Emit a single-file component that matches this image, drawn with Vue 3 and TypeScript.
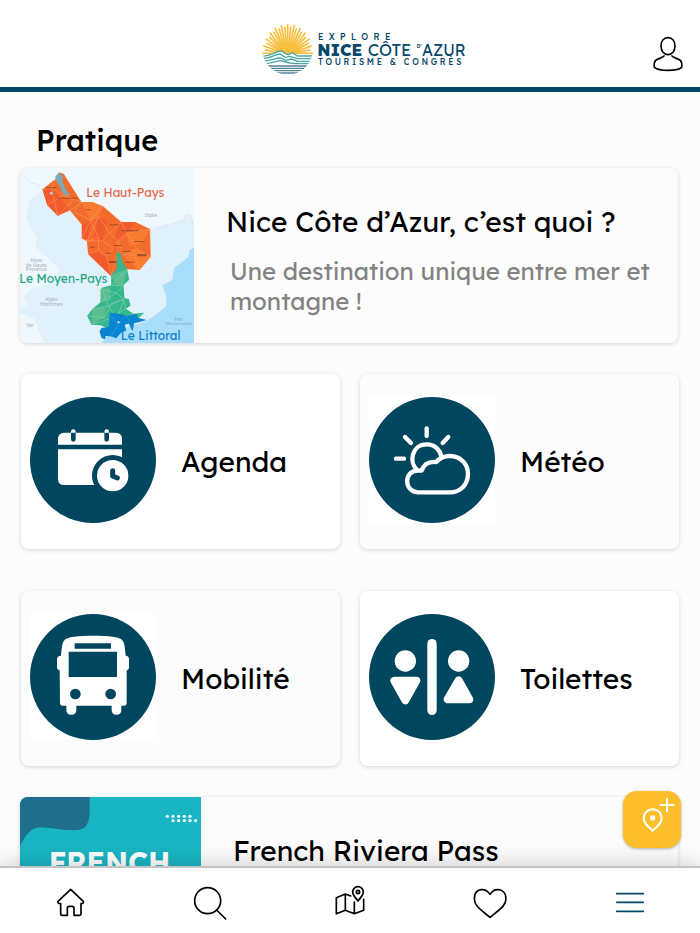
<script setup lang="ts">
interface Tile {
  id: 'agenda' | 'meteo' | 'mobilite' | 'toilettes'
  label: string
  box: string
  white: boolean
}

const tiles: Tile[] = [
  { id: 'agenda', label: 'Agenda', box: '45 80 378 378', white: true },
  { id: 'meteo', label: 'Météo', box: '42 80 378 378', white: false },
  { id: 'mobilite', label: 'Mobilité', box: '45 86 378 378', white: false },
  { id: 'toilettes', label: 'Toilettes', box: '42 86 378 378', white: true },
]

// Sun rays fan out over the upper half of the logo disc.
const rays = Array.from({ length: 25 }, (_, i) => {
  const angle = (Math.PI * i) / 24
  const outer = i % 2 === 0 ? 76 : 69
  return {
    x1: 113 - Math.cos(angle) * 24,
    y1: 130 - Math.sin(angle) * 20,
    x2: 113 - Math.cos(angle) * outer,
    y2: 130 - Math.sin(angle) * (outer + 12),
  }
})

const passDots = [
  [472, 95], [489, 95], [506, 95], [523, 95], [540, 95],
  [489, 108], [506, 108], [523, 108], [540, 108], [557, 108],
]
</script>

<template>
  <div class="app">
    <header class="topbar">
      <a class="logo" href="#" aria-label="Explore Nice Côte d'Azur">
        <svg class="logo-art" viewBox="30 0 630 225" aria-hidden="true">
          <clipPath id="disc"><circle cx="113" cy="118" r="76" /></clipPath>
          <g stroke="#f8be3c" stroke-width="5">
            <line v-for="(r, i) in rays" :key="i" :x1="r.x1" :y1="r.y1" :x2="r.x2" :y2="r.y2" />
          </g>
          <path d="M77 132a36 34 0 0 1 72 0z" fill="#f8be3c" />
          <g clip-path="url(#disc)">
            <path d="M36 137C65 134 80 122 94 122L104 129L115 132L126 128L142 137H190V200H36z" fill="#fff" />
            <g fill="none" stroke="#4aa7a3" stroke-width="4">
              <path d="M36 139C65 138 78 123 94 123L106 131L115 134L127 128L142 138H190" />
              <path d="M36 146C60 147 76 132 91 132L105 142L120 139L142 146H190" />
              <path d="M36 153C60 154 76 143 92 144L108 151L124 147L143 154H190" />
              <path d="M36 161C64 162 78 151 96 153L120 159L138 161H190" />
            </g>
            <g stroke="#54849b" stroke-width="4">
              <path d="M36 168H190M36 175H190M36 182H190M36 189H190" />
            </g>
          </g>
          <g fill="#07486a" class="logo-text">
            <text x="204" y="91" font-size="26" font-weight="500" letter-spacing="16">EXPLORE</text>
            <text x="202" y="137" font-size="49" font-weight="800">NICE</text>
            <text x="353" y="137" font-size="50" font-weight="400">CÔTE</text>
            <text x="500" y="115" font-size="14" font-weight="700">D’</text>
            <text x="516" y="137" font-size="47" font-weight="400">AZUR</text>
            <text x="204" y="165" font-size="25" font-weight="500" letter-spacing="8">TOURISME &amp; CONGRÈS</text>
          </g>
        </svg>
      </a>
      <button class="account" type="button" aria-label="Mon compte">
        <svg class="line-icon" viewBox="264 41 120 120" aria-hidden="true">
          <path d="M324 52C337 52 345 62 345 77C345 92 336 103 324 103C312 103 303 92 303 77C303 62 311 52 324 52Z" />
          <path d="M312 107C306 114 293 114 286 121C282 126 282 133 283 141C292 148 309 150 324 150C339 150 357 148 365 141C366 133 366 126 362 121C355 114 342 114 336 107" />
        </svg>
      </button>
    </header>

    <main class="content">
      <h1 class="section-title">Pratique</h1>

      <a class="card wide" href="#">
        <svg class="map" viewBox="30 24 523 525" preserveAspectRatio="xMidYMid slice" aria-hidden="true">
          <path d="M30 24H553V549H30z" fill="#eff8fe" />
          <path d="M100 88L60 120L47 170L60 200L80 230L76 260L110 290L150 330L125 370L60 390L40 410L55 440L30 440V460L76 478L85 510L105 549H553V190L542 166L527 167L520 182L420 210L330 180L180 150z" fill="#e0f1fc" />
          <path d="M553 262L540 270L535 292L492 325L488 360L458 376L468 405L470 438L430 470L405 485L370 495L300 520L275 549H553z" fill="#a8ddfb" />
          <path d="M30 38L60 68L80 73L100 88M420 208L520 182L527 165L542 164L553 208" fill="none" stroke="#ccd5dc" stroke-width="2" stroke-dasharray="6 4" />
          <path d="M148 37L162 42L215 127L247 126L279 139L334 186L378 187L420 207L422 291L389 330L343 327L304 348L266 313L235 282L231 243L216 235L216 194L180 151L144 167L112 135L98 88L137 57z" fill="#f36b2b" />
          <path d="M98 88L130 85L148 112L180 150L144 167L112 135zM216 194L242 180L235 240L216 235zM266 170L292 183L279 242L250 240zM334 186L378 187L350 220L310 245zM235 282L266 272L291 290L304 348z" fill="#f15a2c" />
          <path d="M215 127L247 126L279 139L266 170L242 180zM350 220L420 207L400 245L360 260zM341 285L380 265L422 291L389 330z" fill="#fa7c30" />
          <g fill="none" stroke="#ff9259" stroke-width="2">
            <path d="M98 88L125 85L190 120L144 167L125 85L148 37M112 135L162 105L215 127L180 151" />
            <path d="M215 127L190 155L242 180L216 235L231 243L266 233L242 180L279 139L334 186L300 220L266 170L242 180M266 170L231 243L279 242L300 220L325 245L341 285L389 330L375 285L341 285L380 265L422 291L420 207L350 220L334 186M279 242L310 265L291 290L266 272L235 282M266 272L266 233M291 290L304 348L325 277L325 245L350 220L380 265" />
          </g>
          <path d="M137 48L148 38L159 48L158 64L171 92L181 105L168 106L156 96L150 78L137 61z" fill="#7ca8b7" />
          <g fill="#73351f">
            <path d="M108 82h32v3h-32zM144 113h57v3h-57zM228 148h15v3h-15zM299 193h28v3h-28zM335 211h51v3h-51zM374 243h28v3h-28zM313 255h22v3h-22zM240 260h15v3h-15zM288 278h16v3h-16zM337 273h26v3h-26zM382 282h28v7h-28zM346 305h27v3h-27zM297 303h23v6h-23z" opacity=".6" />
          </g>
          <circle cx="124" cy="100" r="4" fill="#aad4ff" />
          <path d="M321 276L332 279L337 303L352 328L358 359L341 376L344 414L357 417L362 437L348 446L371 461L403 458L385 475L305 510L272 496L245 494L232 468L247 448L272 427L276 383L304 376L304 345L321 327z" fill="#35b68b" />
          <path d="M272 387L301 382L303 420L272 427zM247 448L288 441L284 473L245 494zM304 345L352 328L341 376L320 380z" fill="#5bbe91" />
          <path d="M272 387L320 399L341 376L304 376L352 328M276 383L295 438L341 418L320 399L272 427L247 448L295 438L321 476L344 414M232 468L284 473L305 430L341 418L348 446L303 475L245 494M321 476L371 461" fill="none" stroke="#82ceb0" stroke-width="2" />
          <path d="M300 458L332 462L350 467L381 462L383 473L410 480L389 486L373 490L368 514L357 491L345 494L349 512L336 516L319 535L302 529L288 528L285 538L275 534L269 514L275 504L297 500z" fill="#0785d0" />
          <path d="M300 462L325 495L302 529M325 495L345 470M350 467L360 485" fill="none" stroke="#389fdf" stroke-width="2" />
          <circle cx="326" cy="487" r="3" fill="#fff" />
          <g class="map-text">
            <text x="404" y="172" font-size="14" fill="#acb5bc">Italie</text>
            <g font-size="14" fill="#acb5bc" text-anchor="middle">
              <text x="79" y="306">Alpes</text>
              <text x="79" y="320">de Haute</text>
              <text x="79" y="334">Provence</text>
              <text x="124" y="424">Alpes</text>
              <text x="124" y="439">Maritimes</text>
              <text x="60" y="502">Var</text>
              <text x="506" y="482" fill="#84b4d4">Mer</text>
              <text x="507" y="495" font-size="12" fill="#84b4d4">Méditerranée</text>
            </g>
            <text x="229" y="110" font-size="36" fill="#e4694b">Le Haut-Pays</text>
            <text x="28" y="368" font-size="36" fill="#25a681">Le Moyen-Pays</text>
            <text x="333" y="540" font-size="36" fill="#087fc9">Le Littoral</text>
          </g>
        </svg>
        <div class="wide-body">
          <h2 class="card-title">Nice Côte d’Azur, c’est quoi ?</h2>
          <p class="card-text">Une destination unique entre mer et montagne !</p>
        </div>
      </a>

      <div class="tiles">
        <a v-for="tile in tiles" :key="tile.id" class="card tile" :class="{ 'is-white': tile.white }" href="#">
          <svg class="tile-icon" :viewBox="tile.box" aria-hidden="true">
            <template v-if="tile.id === 'agenda'">
              <circle cx="234" cy="269" r="189" fill="#00465f" />
              <path d="M129 223V207Q129 187 148 187H303Q321 187 321 207V223zM129 237H321V344H148Q129 344 129 326z" fill="#fff" />
              <path d="M175 184V207M275 184V207" stroke="#00465f" stroke-width="14" stroke-linecap="round" />
              <path d="M168 187V184a7 7 0 0 1 14 0V187zM268 187V184a7 7 0 0 1 14 0V187z" fill="#fff" />
              <circle cx="293" cy="316" r="62" fill="#00465f" />
              <circle cx="293" cy="316" r="47" fill="#fff" />
              <path d="M293 301V317L307 323" fill="none" stroke="#00465f" stroke-width="15" stroke-linecap="round" stroke-linejoin="round" />
            </template>
            <template v-else-if="tile.id === 'meteo'">
              <path d="M42 80h378v378H42z" fill="#fff" />
              <circle cx="231" cy="269" r="189" fill="#00465f" />
              <g fill="none" stroke="#fff" stroke-width="13" stroke-linecap="round" stroke-linejoin="round">
                <path d="M215 174V197M150 200L168 218M280 200L263 218M123 265H147" />
                <path d="M187 299C161 277 169 222 215 222C239 222 255 238 259 259" />
                <path d="M188 366C147 364 145 301 188 301L200 301C207 280 225 273 244 275C257 260 268 257 284 257C322 257 339 286 339 311C339 343 316 366 284 366Z" />
              </g>
            </template>
            <template v-else-if="tile.id === 'mobilite'">
              <path d="M45 86h378v378H45z" fill="#fff" />
              <circle cx="234" cy="275" r="189" fill="#00465f" />
              <path d="M138 211C140 190 141 174 147 166C154 153 193 151 235 151C278 151 316 153 323 166C329 174 330 190 332 211Q342 212 342 221V244Q342 254 335 255V352Q335 361 327 361H319V373Q319 388 304 388Q290 388 290 373V361H184V373Q184 388 169 388Q154 388 154 373V361H143Q135 361 135 352L134 255Q126 254 126 244V221Q126 212 138 211Z" fill="#fff" />
              <path d="M179 174H288V190H179zM161 199H306V275H161z" fill="#00465f" />
              <circle cx="181" cy="326" r="16" fill="#00465f" />
              <circle cx="287" cy="326" r="16" fill="#00465f" />
            </template>
            <template v-else>
              <circle cx="231" cy="275" r="189" fill="#00465f" />
              <g fill="#fff" stroke="#fff" stroke-linejoin="round">
                <rect x="217" y="161" width="28" height="228" rx="14" stroke="none" />
                <circle cx="151" cy="227" r="32" stroke="none" />
                <circle cx="311" cy="227" r="32" stroke="none" />
                <path d="M118 286H184L151 345Z" stroke-width="24" />
                <path d="M278 342H343L311 285Z" stroke-width="24" />
              </g>
            </template>
          </svg>
          <span class="tile-label">{{ tile.label }}</span>
        </a>
      </div>

      <a class="card wide pass" href="#">
        <svg class="pass-art" viewBox="30 37 543 525" preserveAspectRatio="xMidYMin slice" aria-hidden="true">
          <path d="M30 37H573V562H30z" fill="#1ab5c3" />
          <path d="M30 37H239V75C239 118 228 137 190 137C150 137 120 128 90 128C63 128 44 155 30 184z" fill="#1f6e8c" />
          <circle v-for="(d, i) in passDots" :key="i" :cx="d[0]" :cy="d[1]" r="5" fill="#e7fbfc" />
          <text x="116" y="264" font-size="86" font-weight="700" fill="#fff" class="pass-text">FRENCH</text>
        </svg>
        <div class="wide-body">
          <h2 class="card-title">French Riviera Pass</h2>
        </div>
      </a>
    </main>

    <div class="dock">
      <button class="add-place" type="button" aria-label="Ajouter un lieu">
        <svg class="add-icon" viewBox="908 16 174 171" aria-hidden="true">
          <path d="M997 71C981 71 970 83 970 98C970 113 984 124 997 135C1010 124 1024 113 1024 98C1024 83 1013 71 997 71ZM1040 37V80M1018 58H1062" fill="none" stroke="#fff" stroke-width="6" stroke-linejoin="round" />
          <circle cx="997" cy="97" r="8" fill="#fff" />
        </svg>
      </button>
      <nav class="nav" aria-label="Navigation principale">
        <a class="nav-item" href="#" aria-label="Accueil">
          <svg class="line-icon" viewBox="120 288 120 120" aria-hidden="true">
            <path d="M182 313L220 349Q222 356 213 356V387Q213 391 207 391H192V370Q192 364 186 364H177Q172 364 172 370V391H157Q152 391 152 386V356Q142 356 144 349Z" />
          </svg>
        </a>
        <a class="nav-item" href="#" aria-label="Rechercher">
          <svg class="line-icon" viewBox="540 288 120 120" aria-hidden="true">
            <circle cx="593" cy="347" r="39" />
            <path d="M620 375L647 402" />
          </svg>
        </a>
        <a class="nav-item" href="#" aria-label="Carte">
          <svg class="line-icon" viewBox="30 288 120 120" aria-hidden="true">
            <path d="M92 333L76 327L49 338V386L76 376L103 386L131 376V343M76 327V376M103 351V386" />
            <path d="M114 305C104 305 98 313 98 321C98 331 107 338 114 348C121 338 130 331 130 321C130 313 124 305 114 305Z" />
            <circle cx="114" cy="321" r="5" />
          </svg>
        </a>
        <a class="nav-item" href="#" aria-label="Favoris">
          <svg class="line-icon" viewBox="450 288 120 120" aria-hidden="true">
            <path d="M510 328C501 314 491 313 483 314C469 316 463 328 463 341C463 363 482 374 510 397C538 374 558 363 558 341C558 328 551 316 537 314C529 313 519 314 510 328Z" />
          </svg>
        </a>
        <a class="nav-item active" href="#" aria-label="Menu">
          <svg class="line-icon" viewBox="870 288 120 120" aria-hidden="true">
            <path d="M890 326H970M890 352H970M890 379H970" />
          </svg>
        </a>
      </nav>
    </div>
  </div>
</template>

<style>
body {
  margin: 0;
  background: #fcfcfc;
}
</style>

<style scoped>
.app {
  display: flex;
  flex-direction: column;
  height: 100vh;
  color: #000;
  font-family: Lexend, Inter, "Open Sans", sans-serif;
}
.app *,
.app {
  box-sizing: border-box;
}
a {
  color: inherit;
  text-decoration: none;
}
button {
  padding: 0;
  border: 0;
  background: none;
  cursor: pointer;
}
svg {
  display: block;
}
.topbar {
  display: grid;
  grid-template-columns: 1fr auto 1fr;
  flex: none;
  align-items: end;
  padding: 10px 12px 2px;
  border-bottom: 5px solid #00476a;
  background: #fff;
}
.logo {
  grid-column: 2;
  padding-left: 30px;
}
.logo-art {
  width: 210px;
  height: 75px;
}
.account {
  justify-self: end;
  padding-bottom: 11px;
}
.line-icon {
  width: 40px;
  height: 40px;
  fill: none;
  stroke: currentColor;
  stroke-width: 5;
  stroke-linecap: round;
  stroke-linejoin: round;
}
.content {
  flex: 1;
  min-height: 0;
  padding: 32px 20px 0;
  overflow-y: auto;
  scrollbar-width: none;
}
.section-title {
  margin: 0 16px 12px;
  font-size: 29px;
  font-weight: 500;
  line-height: 32px;
}
.card {
  display: flex;
  border-radius: 8px;
  background: #fcfcfc;
  box-shadow: 0 1px 4px rgba(0, 0, 0, 0.16);
}
.wide {
  min-height: 175px;
  margin-right: 2px;
  overflow: hidden;
}
.map {
  flex: none;
  width: 174px;
  height: 175px;
}
.wide-body {
  flex: 1;
  padding: 36px 16px 0 32px;
}
.card-title {
  margin: 0;
  font-size: 28px;
  font-weight: 400;
  line-height: 36px;
}
.card-text {
  margin: 16px 0 0 4px;
  color: #828282;
  font-size: 24px;
  line-height: 30px;
}
.tiles {
  display: grid;
  grid-template-columns: 1fr 1fr;
  gap: 42px 20px;
  margin: 31px 1px;
}
.tile {
  align-items: center;
  gap: 25px;
  min-height: 175px;
  padding: 0 9px 4px;
}
.is-white {
  background: #fff;
}
.tile-icon {
  flex: none;
  width: 126px;
  height: 126px;
}
.tile-label {
  padding-top: 4px;
  font-size: 28px;
  line-height: 36px;
}
.pass-art {
  flex: none;
  width: 181px;
  height: 175px;
}
.dock {
  position: relative;
  flex: none;
}
.add-place {
  position: absolute;
  right: 19px;
  bottom: 100%;
  margin-bottom: 18px;
  border-radius: 14px;
  background: #fcbf2b;
  box-shadow: 0 1px 3px rgba(0, 0, 0, 0.3);
}
.add-icon {
  width: 58px;
  height: 57px;
}
.nav {
  display: grid;
  grid-template-columns: repeat(5, 1fr);
  border-top: 2px solid #c4c4c4;
  background: #fff;
  box-shadow: 0 -2px 20px rgba(0, 0, 0, 0.18);
}
.nav-item {
  display: flex;
  justify-content: center;
  padding: 13px 0 12px;
}
.active {
  color: #00476a;
}
.logo-text,
.map-text,
.pass-text {
  font-family: Lexend, Lato, sans-serif;
}
</style>
